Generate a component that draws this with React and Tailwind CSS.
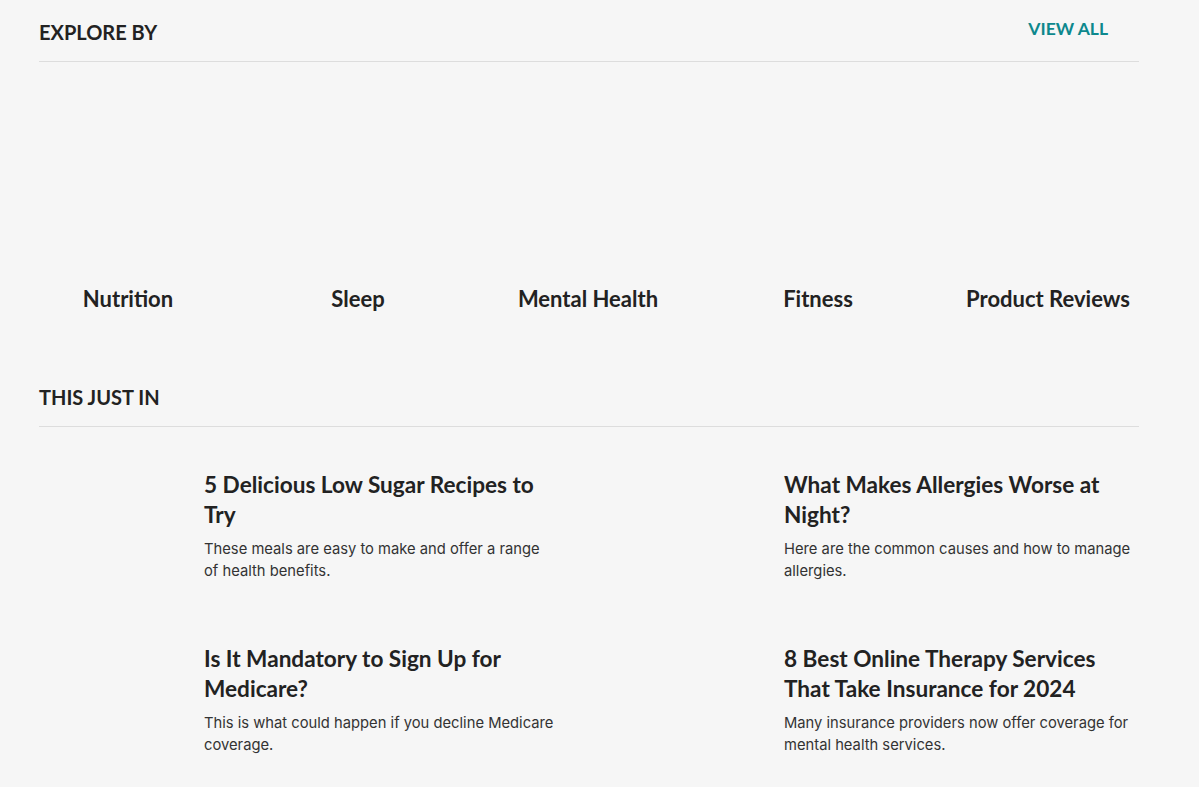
export default function App() {
  const cats = ["Nutrition", "Sleep", "Mental Health", "Fitness", "Product Reviews"];
  const articles = [
    { t: "5 Delicious Low Sugar Recipes to Try", d: "These meals are easy to make and offer a range of health benefits." },
    { t: "What Makes Allergies Worse at Night?", d: "Here are the common causes and how to manage allergies." },
    { t: "Is It Mandatory to Sign Up for Medicare?", d: "This is what could happen if you decline Medicare coverage." },
    { t: "8 Best Online Therapy Services That Take Insurance for 2024", d: "Many insurance providers now offer coverage for mental health services." },
  ];
  return (
    <div className="min-h-[787px] bg-[#f6f6f6] text-[#222] font-['Lato',sans-serif]">
      <div className="w-[1100px] ml-[39px]">
        <div className="flex items-start justify-between h-[62px] border-b border-[#dddddd]">
          <h2 className="mt-[18px] text-[20px] leading-[28px] font-bold">EXPLORE BY</h2>
          <a className="mt-[17px] mr-[31px] text-[17.5px] leading-[24px] font-bold text-[#0d888d]">VIEW ALL</a>
        </div>
        <div className="ml-[-26px] w-[1150px] grid grid-cols-5 pt-[221px]">
          {cats.map((c) => (
            <div key={c} className="text-center text-[22px] leading-[32px] font-bold">{c}</div>
          ))}
        </div>
        <div className="mt-[68px] h-[44px] border-b border-[#dddddd]">
          <h2 className="text-[20px] leading-[28px] font-bold">THIS JUST IN</h2>
        </div>
        <div className="grid grid-cols-2 gap-x-[60px] gap-y-[24px] mt-[43px]">
          {articles.map((a) => (
            <div key={a.t} className="flex gap-[15px] h-[150px]">
              <div className="w-[150px] h-[150px] shrink-0" />
              <div className="w-[353px]">
                <h3 className="text-[22.6px] leading-[30px] font-bold">{a.t}</h3>
                <p className="mt-[8px] text-[14.75px] leading-[22px] text-[#333] font-['Inter',sans-serif]">{a.d}</p>
              </div>
            </div>
          ))}
        </div>
      </div>
    </div>
  );
}
